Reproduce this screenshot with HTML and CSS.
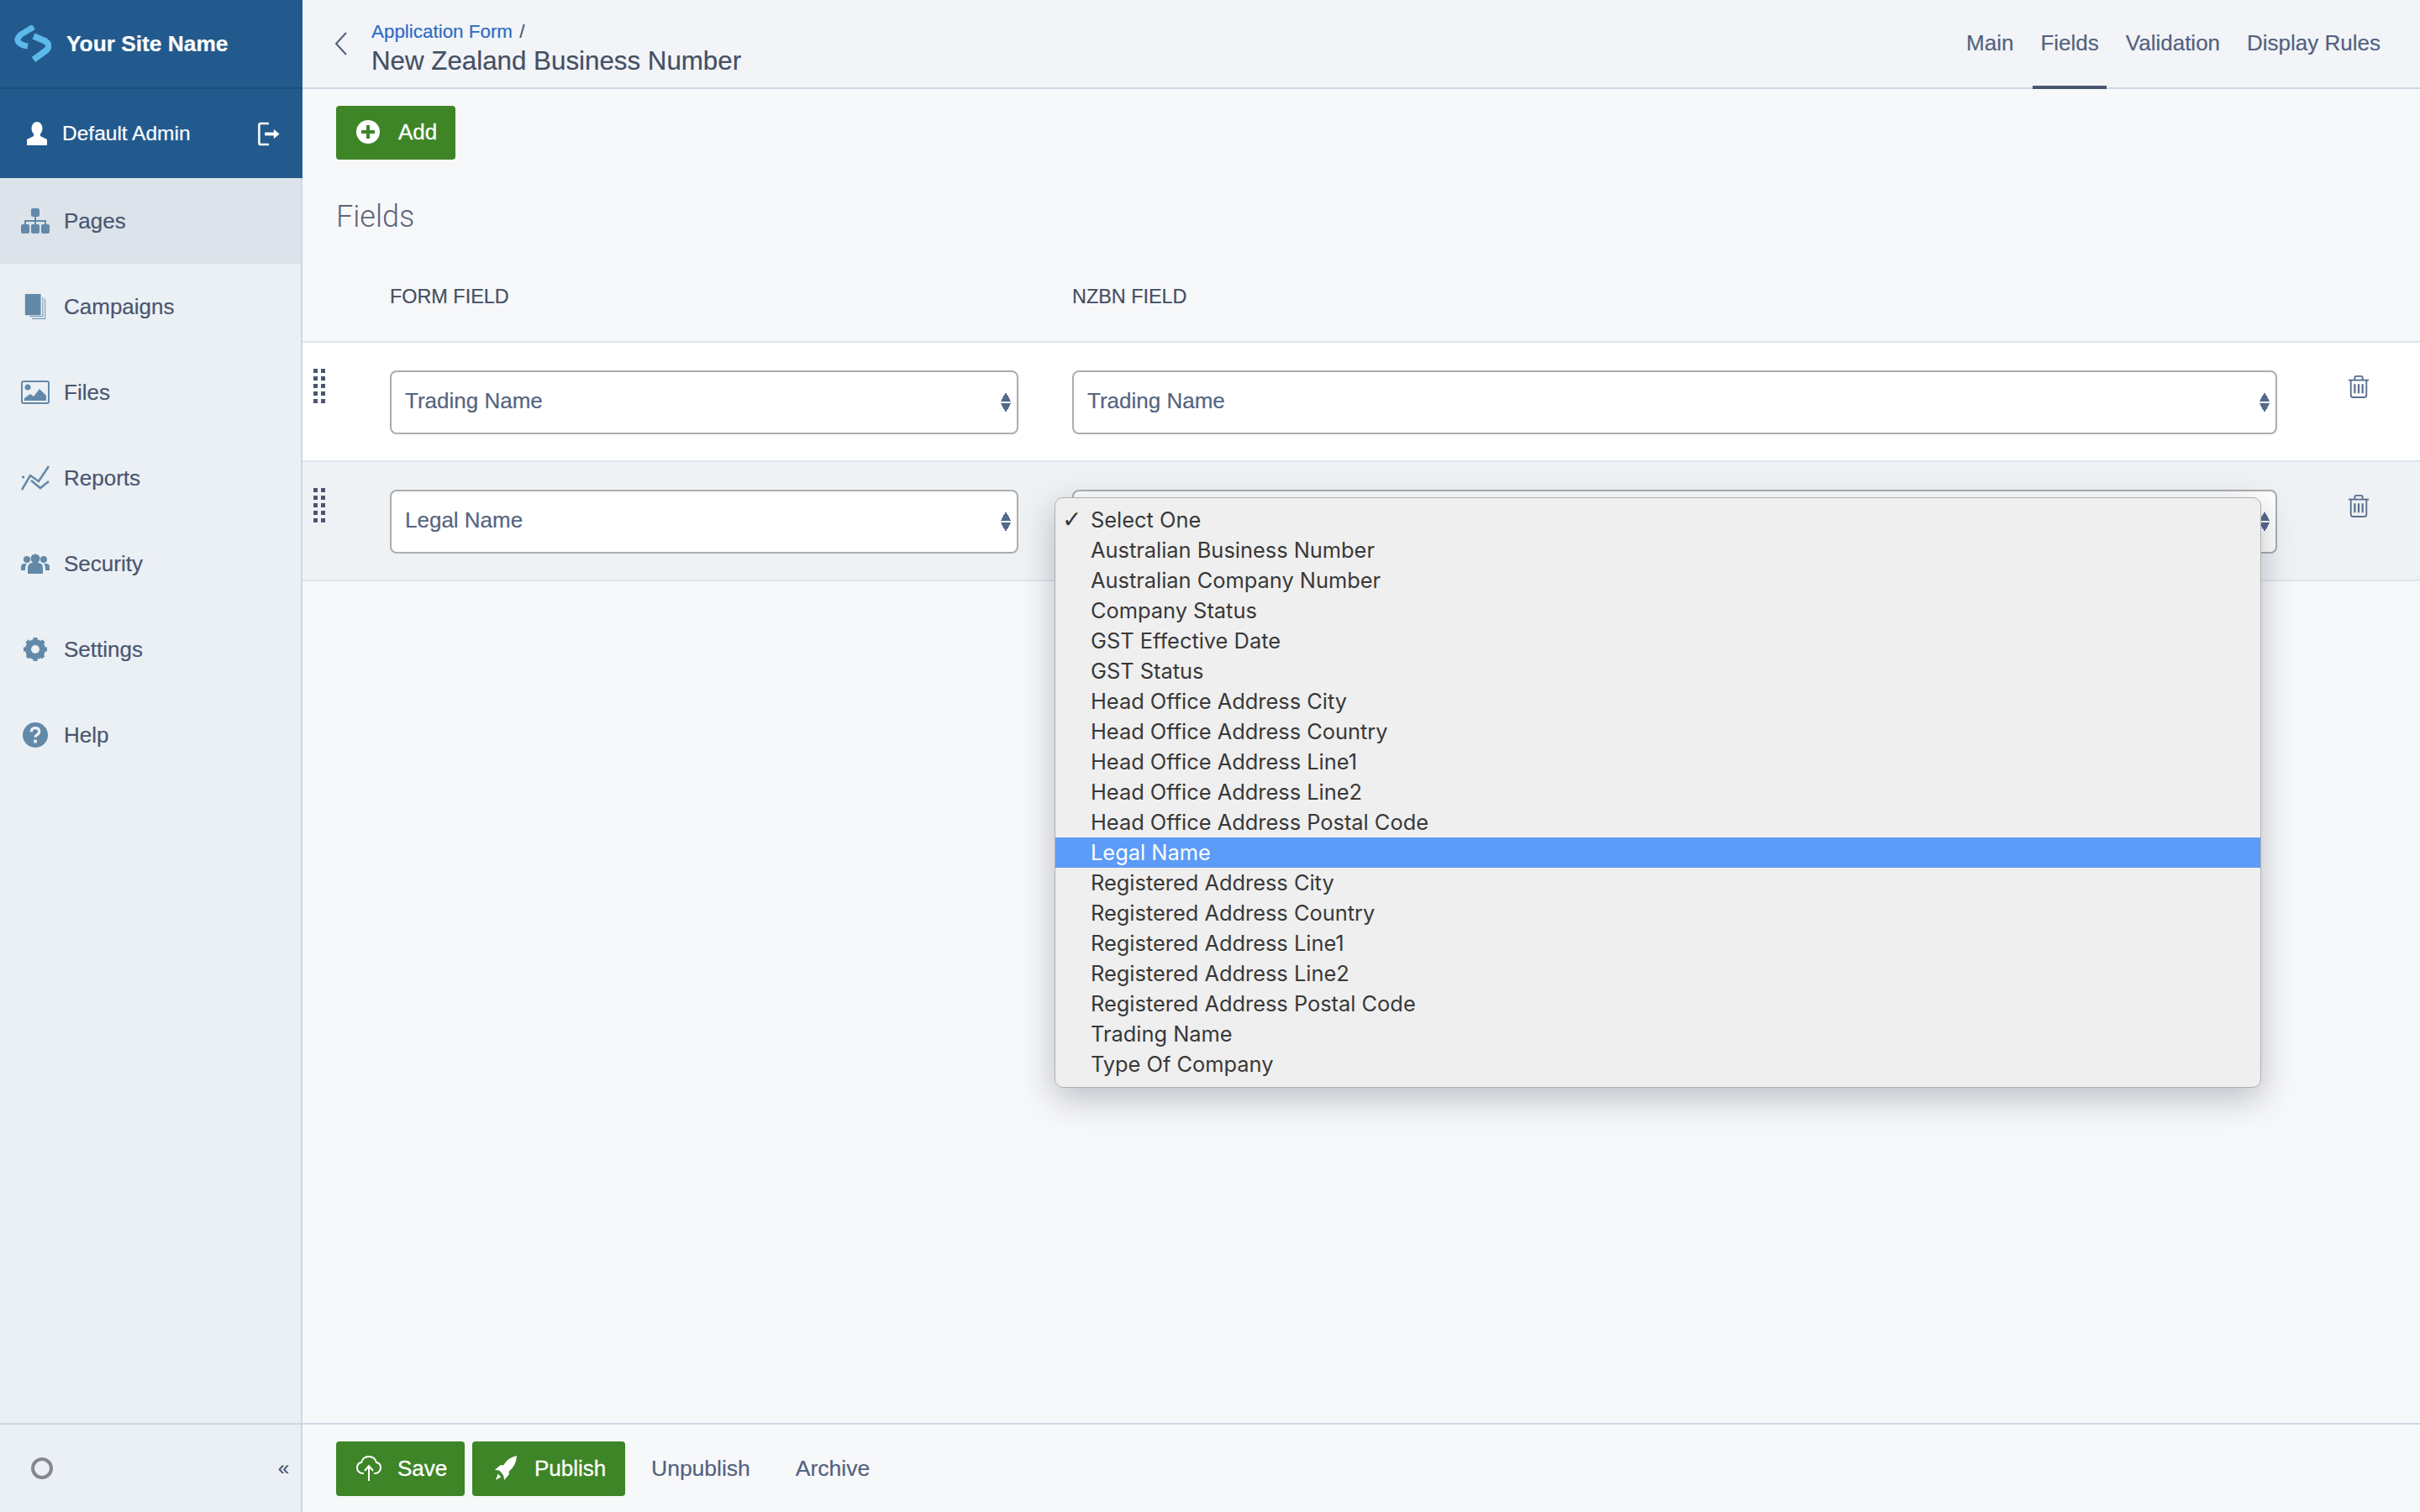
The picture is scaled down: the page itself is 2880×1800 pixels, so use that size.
FILE: index.html
```html
<!DOCTYPE html>
<html lang="en">
<head>
    <meta charset="UTF-8">
    <title>New Zealand Business Number</title>
    <link rel="stylesheet" href="styles.css">
</head>
<body>
    <aside class="sidebar">
        <div class="brand">
            <svg class="brand-logo" viewBox="0 0 44 44" fill="none" stroke="#5cb9ea" stroke-width="7" stroke-linejoin="round">
                <path d="M23 2 L8 11 Q1 17 6 21 Q9 24 16 25"/>
                <path d="M23 13 L37 19 Q44 24 38 30 L23 41" stroke-width="7.500"/>
            </svg>
            <span>Your Site Name</span>
        </div>
        <div class="user">
            <svg class="user-icon" viewBox="0 0 24 28" fill="#fff"><ellipse cx="12" cy="8" rx="6.500" ry="8"/><path d="M8 14h8v3l8 4v7H0v-7l8-4z"/></svg>
            <span class="user-name">Default Admin</span>
            <svg class="logout" viewBox="0 0 28 30" fill="none" stroke="#fff" stroke-width="2.600"><path d="M14 2H4Q2 2 2 4V26Q2 28 4 28H14"/><path d="M9 15H21" stroke-width="4"/><path d="M20 9L27 15L20 21Z" fill="#fff" stroke="none"/></svg>
        </div>
        <nav class="nav">
            <a class="nav-item active">
                <svg class="nav-icon" viewBox="0 0 34 30" fill="#6389a8"><rect x="12" y="0" width="10" height="10" rx="2"/><rect x="0" y="19" width="10" height="11" rx="2"/><rect x="12" y="19" width="10" height="11" rx="2"/><rect x="24" y="19" width="10" height="11" rx="2"/><path d="M16 10h2v4h12v5h-2v-3H18v3h-2v-3H6v3H4v-5h12z"/></svg>
                Pages
            </a>
            <a class="nav-item">
                <svg class="nav-icon" viewBox="0 0 34 32" fill="#6389a8"><rect x="4" y="0" width="20" height="27"/><path d="M26 4h1v25H10v-1h16z"/><path d="M29 6h1v26H13v-1h16z"/></svg>
                Campaigns
            </a>
            <a class="nav-item">
                <svg class="nav-icon" viewBox="0 0 34 28" fill="#6389a8"><rect x="1" y="1" width="32" height="26" rx="2" fill="none" stroke="#6389a8" stroke-width="2"/><circle cx="8" cy="8" r="3.500"/><path d="M4 24v-3l7-5 4 3 7-9 8 8v6z"/></svg>
                Files
            </a>
            <a class="nav-item">
                <svg class="nav-icon" viewBox="0 0 34 30" fill="none" stroke="#6389a8" stroke-width="2.600"><path d="M1 29L11 12L21 19L33 1"/><path d="M1 14H4"/><path d="M12 18L23 27L33 19"/></svg>
                Reports
            </a>
            <a class="nav-item">
                <svg class="nav-icon" viewBox="0 0 34 24" fill="#6389a8"><circle cx="17" cy="6" r="5.500"/><circle cx="7" cy="7" r="4"/><circle cx="27" cy="7" r="4"/><path d="M8 24v-7q0-5 5-6h8q5 1 5 6v7z"/><path d="M0 20v-4q0-4 4-4h3q-2 2-2 5v3z"/><path d="M34 20v-4q0-4-4-4h-3q2 2 2 5v3z"/></svg>
                Security
            </a>
            <a class="nav-item">
                <svg class="nav-icon" viewBox="0 0 30 30" fill="none" stroke="#6389a8"><circle cx="15" cy="15" r="8.500" stroke-width="7"/><path d="M15 1v28M1 15h28M5 5l20 20M25 5L5 25" stroke-width="5" stroke-dasharray="5 18 5"/></svg>
                Settings
            </a>
            <a class="nav-item">
                <svg class="nav-icon" viewBox="0 0 32 32"><circle cx="16" cy="16" r="16" fill="#6389a8"/><path d="M11 12q0-5 5-5t5 4.500q0 3-3 4.500-2 1-2 3" fill="none" stroke="#ecf0f5" stroke-width="3.400"/><rect x="14" y="22" width="4" height="4" fill="#ecf0f5"/></svg>
                Help
            </a>
        </nav>
        <div class="side-foot">
            <span class="ring"></span>
            <span class="collapse">«</span>
        </div>
    </aside>

    <main class="main">
        <header class="topbar">
            <svg class="back" viewBox="0 0 16 28" fill="none" stroke="#4f5d75" stroke-width="2"><path d="M14 1L2 14L14 27"/></svg>
            <div class="crumbs">
                <div class="crumb-line"><a class="crumb-link">Application Form</a> <span class="crumb-sep">/</span></div>
                <div class="page-title">New Zealand Business Number</div>
            </div>
            <div class="tabs">
                <a class="tab">Main</a>
                <a class="tab current">Fields</a>
                <a class="tab">Validation</a>
                <a class="tab">Display Rules</a>
            </div>
        </header>

        <div class="content">
            <div class="toolbar">
                <button class="btn btn-add">
                    <svg class="btn-icon-plus" viewBox="0 0 28 28"><circle cx="14" cy="14" r="14" fill="#fff"/><path d="M14 6v16M6 14h16" stroke="#3d8527" stroke-width="4"/></svg>
                    Add
                </button>
            </div>
            <h2 class="section-title">Fields</h2>
            <div class="col-heads">
                <div class="col-form">FORM FIELD</div>
                <div class="col-nzbn">NZBN FIELD</div>
            </div>

            <div class="map-row">
                <div class="drag"><i></i><i></i><i></i><i></i><i></i><i></i><i></i><i></i><i></i><i></i></div>
                <div class="select col-form">Trading Name<span class="arrows"></span></div>
                <div class="select col-nzbn">Trading Name<span class="arrows"></span></div>
                <svg class="trash" viewBox="0 0 28 30" fill="none" stroke="#5a6f90" stroke-width="2"><path d="M1 7H27"/><path d="M9 7V4Q9 2 11 2H17Q19 2 19 4V7"/><path d="M4 7V26Q4 29 7 29H21Q24 29 24 26V7"/><path d="M9 12V24M14 12V24M19 12V24" stroke-width="2.400"/></svg>
            </div>
            <div class="map-row alt">
                <div class="drag"><i></i><i></i><i></i><i></i><i></i><i></i><i></i><i></i><i></i><i></i></div>
                <div class="select col-form">Legal Name<span class="arrows"></span></div>
                <div class="select col-nzbn"><span class="arrows"></span></div>
                <svg class="trash" viewBox="0 0 28 30" fill="none" stroke="#5a6f90" stroke-width="2"><path d="M1 7H27"/><path d="M9 7V4Q9 2 11 2H17Q19 2 19 4V7"/><path d="M4 7V26Q4 29 7 29H21Q24 29 24 26V7"/><path d="M9 12V24M14 12V24M19 12V24" stroke-width="2.400"/></svg>
            </div>
        </div>

        <footer class="actions">
            <button class="btn btn-save">
                <svg class="btn-icon-cloud" viewBox="0 0 30 32" fill="none" stroke="#fff" stroke-width="2"><path d="M9 22H7Q1 21 1 15Q1 10 6 9Q8 2 15 2Q22 2 24 9Q29 10 29 15Q29 21 23 22H21"/><path d="M15 31V14M10 19L15 13L20 19"/></svg>
                Save
            </button>
            <button class="btn btn-publish">
                <svg class="btn-icon-rocket" viewBox="0 0 30 32" fill="#fff"><path d="M29 0Q18 2 12 12L8 12L1 18L7 19L12 25L13 31L19 24L19 20Q28 13 29 0Z"/><path d="M5 23L9 27L2 31Z"/></svg>
                Publish
            </button>
            <a class="link-action">Unpublish</a>
            <a class="link-action">Archive</a>
        </footer>
    </main>

    <div class="popup">
        <div class="opt checked">Select One</div>
        <div class="opt">Australian Business Number</div>
        <div class="opt">Australian Company Number</div>
        <div class="opt">Company Status</div>
        <div class="opt">GST Effective Date</div>
        <div class="opt">GST Status</div>
        <div class="opt">Head Office Address City</div>
        <div class="opt">Head Office Address Country</div>
        <div class="opt">Head Office Address Line1</div>
        <div class="opt">Head Office Address Line2</div>
        <div class="opt">Head Office Address Postal Code</div>
        <div class="opt hover">Legal Name</div>
        <div class="opt">Registered Address City</div>
        <div class="opt">Registered Address Country</div>
        <div class="opt">Registered Address Line1</div>
        <div class="opt">Registered Address Line2</div>
        <div class="opt">Registered Address Postal Code</div>
        <div class="opt">Trading Name</div>
        <div class="opt">Type Of Company</div>
    </div>
</body>
</html>
```

FILE: styles.css
```css
* {
    box-sizing: border-box;
}
html, body {
    height: 100%;
}
body {
    margin: 0;
    display: flex;
    height: 1800px;
    overflow: hidden;
    font-family: "Liberation Sans", Arial, sans-serif;
    font-size: 26px;
    color: #4a5670;
    background: #f7f8fa;
    -webkit-text-stroke: 0.200px;
}

/* sidebar */
.sidebar {
    width: 360px;
    flex: none;
    display: flex;
    flex-direction: column;
    background: #ebf0f5;
    border-right: 2px solid #cfd6e4;
}
.brand {
    height: 106px;
    margin-right: -2px;
    display: flex;
    align-items: center;
    padding-left: 17px;
    gap: 18px;
    background: #235a8e;
    border-bottom: 2px solid #1e4f7d;
    color: #fff;
    font-weight: bold;
    font-size: 26.300px;
}
.brand-logo {
    width: 44px;
    height: 44px;
}
.user {
    height: 106px;
    margin-right: -2px;
    display: flex;
    align-items: center;
    padding: 0 26px 0 32px;
    background: #235a8e;
    color: #fff;
}
.user-icon {
    width: 24px;
    height: 28px;
    margin-right: 18px;
}
.user-name {
    flex: 1;
    font-size: 24.500px;
}
.logout {
    width: 28px;
    height: 29px;
}
.nav {
    flex: 1;
    display: flex;
    flex-direction: column;
}
.nav-item {
    height: 102px;
    display: flex;
    align-items: center;
    color: #4a5670;
}
.nav-item.active {
    background: #dce3ea;
}
.nav-icon {
    width: 34px;
    height: 30px;
    margin: 0 17px 0 25px;
    flex: none;
}
.side-foot {
    height: 106px;
    border-top: 2px solid #cfd6e4;
    display: flex;
    align-items: center;
    justify-content: space-between;
    padding: 0 14px 0 37px;
}
.ring {
    width: 26px;
    height: 26px;
    border: 4px solid #85888e;
    border-radius: 50%;
}
.collapse {
    font-size: 24px;
    color: #4a5670;
}

/* main column */
.main {
    flex: 1;
    display: flex;
    flex-direction: column;
    min-width: 0;
}
.topbar {
    height: 106px;
    flex: none;
    display: flex;
    align-items: center;
    padding: 0 38px 0 38px;
    background: #f2f4f8;
    border-bottom: 2px solid #cfd6e4;
}
.back {
    width: 16px;
    height: 28px;
    margin-right: 28px;
}
.crumbs {
    flex: 1;
    padding-top: 13px;
}
.crumb-line {
    font-size: 22.400px;
    line-height: 28px;
}
.crumb-link {
    color: #2d6bc4;
}
.crumb-sep {
    margin-left: 2px;
}
.page-title {
    font-size: 31.300px;
    line-height: 42px;
    color: #454f63;
}
.tabs {
    display: flex;
    align-self: stretch;
    margin-bottom: -2px;
}
.tab {
    display: flex;
    align-items: center;
    padding: 0 9px;
    margin-left: 14px;
    color: #53627f;
    border-bottom: 4px solid transparent;
}
.tab.current {
    border-bottom-color: #47566f;
}
.content {
    flex: 1;
}
.toolbar {
    padding: 20px 0 0 40px;
}
.btn {
    display: inline-flex;
    align-items: center;
    border: 0;
    border-radius: 4px;
    background: #3d8527;
    color: #fff;
    font-family: inherit;
    font-size: 26px;
    -webkit-text-stroke: 0.300px #fff;
}
.btn-add {
    width: 142px;
    height: 64px;
    padding: 0 0 2px 24px;
}
.btn-icon-plus {
    width: 28px;
    height: 28px;
    margin-right: 22px;
}
.section-title {
    margin: 44px 0 0 40px;
    font-family: Roboto, "Liberation Sans", sans-serif;
    font-weight: 300;
    font-size: 36px;
    line-height: 48px;
    color: #5a6478;
    -webkit-text-stroke: 0;
}
.col-heads {
    display: flex;
    height: 124px;
    padding-top: 57px;
    font-size: 23.400px;
    line-height: 28px;
    color: #454f63;
}
.col-heads .col-form {
    margin-left: 104px;
    width: 812px;
}
.map-row {
    position: relative;
    height: 142px;
    display: flex;
    align-items: flex-start;
    padding-top: 33px;
    background: #fff;
    border-top: 2px solid #dfe4ec;
    border-bottom: 0;
}
.map-row.alt {
    height: 144px;
    background: #eff2f5;
    border-bottom: 2px solid #dfe4ec;
}
.drag {
    position: absolute;
    left: 13px;
    top: 31px;
    display: grid;
    grid-template-columns: 5px 5px;
    column-gap: 4px;
    row-gap: 4px;
}
.drag i {
    height: 5px;
    background: #4a5670;
}
.select {
    position: relative;
    height: 76px;
    display: flex;
    align-items: center;
    padding: 0 0 3px 16px;
    background: #fff;
    border: 2px solid #adadad;
    border-radius: 8px;
    color: #55647f;
}
.select.col-form {
    width: 748px;
    margin-left: 104px;
}
.select.col-nzbn {
    width: 1434px;
    margin-left: 64px;
}
.arrows {
    position: absolute;
    right: 7px;
    top: 24px;
    width: 12px;
    height: 24px;
    background:
        conic-gradient(from 150deg at 50% 0, #55698c 60deg, transparent 0) top/12px 11px no-repeat,
        conic-gradient(from -30deg at 50% 100%, #55698c 60deg, transparent 0) bottom/12px 11px no-repeat;
}
.trash {
    position: absolute;
    left: 2434px;
    top: 37px;
    width: 26px;
    height: 30px;
}

/* action bar */
.actions {
    height: 106px;
    flex: none;
    display: flex;
    align-items: center;
    gap: 9px;
    padding: 0 0 0 40px;
    border-top: 2px solid #cfd6e4;
}
.btn-save {
    width: 153px;
    height: 65px;
    padding-left: 24px;
}
.btn-publish {
    width: 182px;
    height: 65px;
    padding-left: 26px;
}
.btn-icon-cloud {
    width: 30px;
    height: 32px;
    margin-right: 19px;
}
.btn-icon-rocket {
    width: 28px;
    height: 30px;
    margin-right: 20px;
}
.link-action {
    margin-left: 22px;
    margin-right: 45px;
    font-size: 26.500px;
    color: #53627f;
}
.link-action + .link-action {
    margin-left: 0;
}

/* native select menu, open over the second row */
.popup {
    position: absolute;
    left: 1255px;
    top: 592px;
    width: 1436px;
    height: 703px;
    padding: 8px 0 9px;
    background: #efefef;
    border: 1px solid #b0b0b0;
    border-radius: 10px;
    box-shadow: 0 12px 40px rgba(40, 50, 70, 0.3);
    font-family: Inter, "Liberation Sans", sans-serif;
    font-size: 25.400px;
    color: #383838;
    -webkit-text-stroke: 0;
}
.opt {
    height: 36px;
    line-height: 36px;
    padding-left: 42px;
}
.opt.checked {
    position: relative;
}
.opt.checked::before {
    content: "✓";
    position: absolute;
    left: 8px;
    font-family: "DejaVu Sans", sans-serif;
    font-weight: bold;
    font-size: 28px;
}
.opt.hover {
    background: #5c9bf7;
    color: #fff;
}
```
